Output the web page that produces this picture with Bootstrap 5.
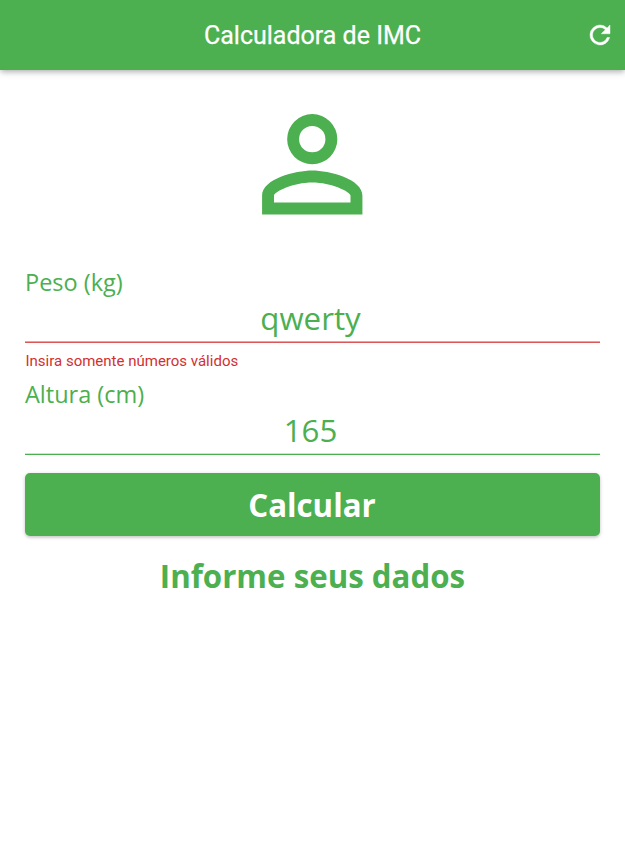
<!DOCTYPE html>
<html lang="pt-BR">
<head>
<meta charset="utf-8">
<meta name="viewport" content="width=device-width, initial-scale=1">
<title>Calculadora de IMC</title>
<link rel="stylesheet" href="https://cdn.jsdelivr.net/npm/bootstrap@5.3.0/dist/css/bootstrap.min.css">
<style>
:root{--green:#4caf50;--red:#d32f2f}
body{font-family:"Open Sans",sans-serif;color:var(--green);background:#fff}
.app-bar{height:70px;background:var(--green);color:#fff;box-shadow:0 2px 5px -1px rgba(0,0,0,.2),0 3px 6px rgba(0,0,0,.1),0 1px 10px rgba(0,0,0,.08);display:grid;grid-template-columns:50px 1fr 50px}
.app-title{font:400 25px/30px Roboto,sans-serif;padding-top:2px;-webkit-text-stroke:.25px #fff}
.refresh{stroke:currentColor;stroke-width:.35}
.person{width:150.5px;height:150.5px}
.icon-area{padding-top:19px;height:177px}
.form-area{padding:19px 25px 0}
.field-label{font-size:23.5px;line-height:32px;height:31px;margin-bottom:0}
.field-input{font-size:31.25px;line-height:42px;height:42px;padding:0 4px 0 0;border:0;border-radius:0;color:var(--green);background:none;text-align:center}
.field-input:focus{box-shadow:none;color:var(--green);background:none}
.field-line{height:2px;margin-top:2px;background:var(--green);border-top:1px solid #c9e7cb}
.field-line.wrong{background:#dc5757;border-top-color:#eba1a1}
.field-error{font:400 15px/18px Roboto,sans-serif;color:var(--red);margin:9px 0 8px .5px}
.btn-calc{height:62.5px;margin-top:18px;background:var(--green);color:#fff;font-size:31.25px;font-weight:700;line-height:42px;border:0;border-radius:5px;padding:2px 1px 0 0;box-shadow:0 1px 4px rgba(0,0,0,.18),0 2px 2px rgba(0,0,0,.08)}
.result{font-size:31.25px;line-height:42px;font-weight:700;margin-top:19.5px}
</style>
<script src="https://cdn.jsdelivr.net/npm/bootstrap@5.3.0/dist/js/bootstrap.bundle.min.js"></script>
</head>
<body>
<header class="app-bar align-items-center">
<span></span>
<h1 class="app-title text-center m-0">Calculadora de IMC</h1>
<button class="btn p-0 border-0 text-white d-flex justify-content-center" aria-label="Reiniciar"><svg class="refresh" width="30" height="30" viewBox="0 0 24 24" fill="currentColor"><path d="M17.65 6.35A7.96 7.96 0 0 0 12 4a8 8 0 1 0 7.73 10h-2.08A6 6 0 1 1 12 6c1.66 0 3.14.69 4.22 1.78L13 11h7V4z"/></svg></button>
</header>
<main>
<div class="icon-area d-flex justify-content-center"><svg class="person" viewBox="0 0 24 24" fill="currentColor"><path d="M12 5.9a2.1 2.1 0 1 1 0 4.2 2.1 2.1 0 0 1 0-4.2m0 9c2.97 0 6.1 1.46 6.1 2.1v1.1H5.9V17c0-.64 3.13-2.1 6.1-2.1M12 4a4 4 0 1 0 0 8 4 4 0 0 0 0-8zm0 9c-2.67 0-8 1.34-8 4v3h16v-3c0-2.66-5.33-4-8-4z"/></svg></div>
<form class="form-area d-flex flex-column">
<label class="field-label" for="peso">Peso (kg)</label>
<input class="form-control field-input" id="peso" value="qwerty">
<div class="field-line wrong"></div>
<div class="field-error">Insira somente números válidos</div>
<label class="field-label" for="altura">Altura (cm)</label>
<input class="form-control field-input" id="altura" value="165">
<div class="field-line"></div>
<button class="btn btn-calc w-100" type="button">Calcular</button>
<div class="result text-center">Informe seus dados</div>
</form>
</main>
</body>
</html>
